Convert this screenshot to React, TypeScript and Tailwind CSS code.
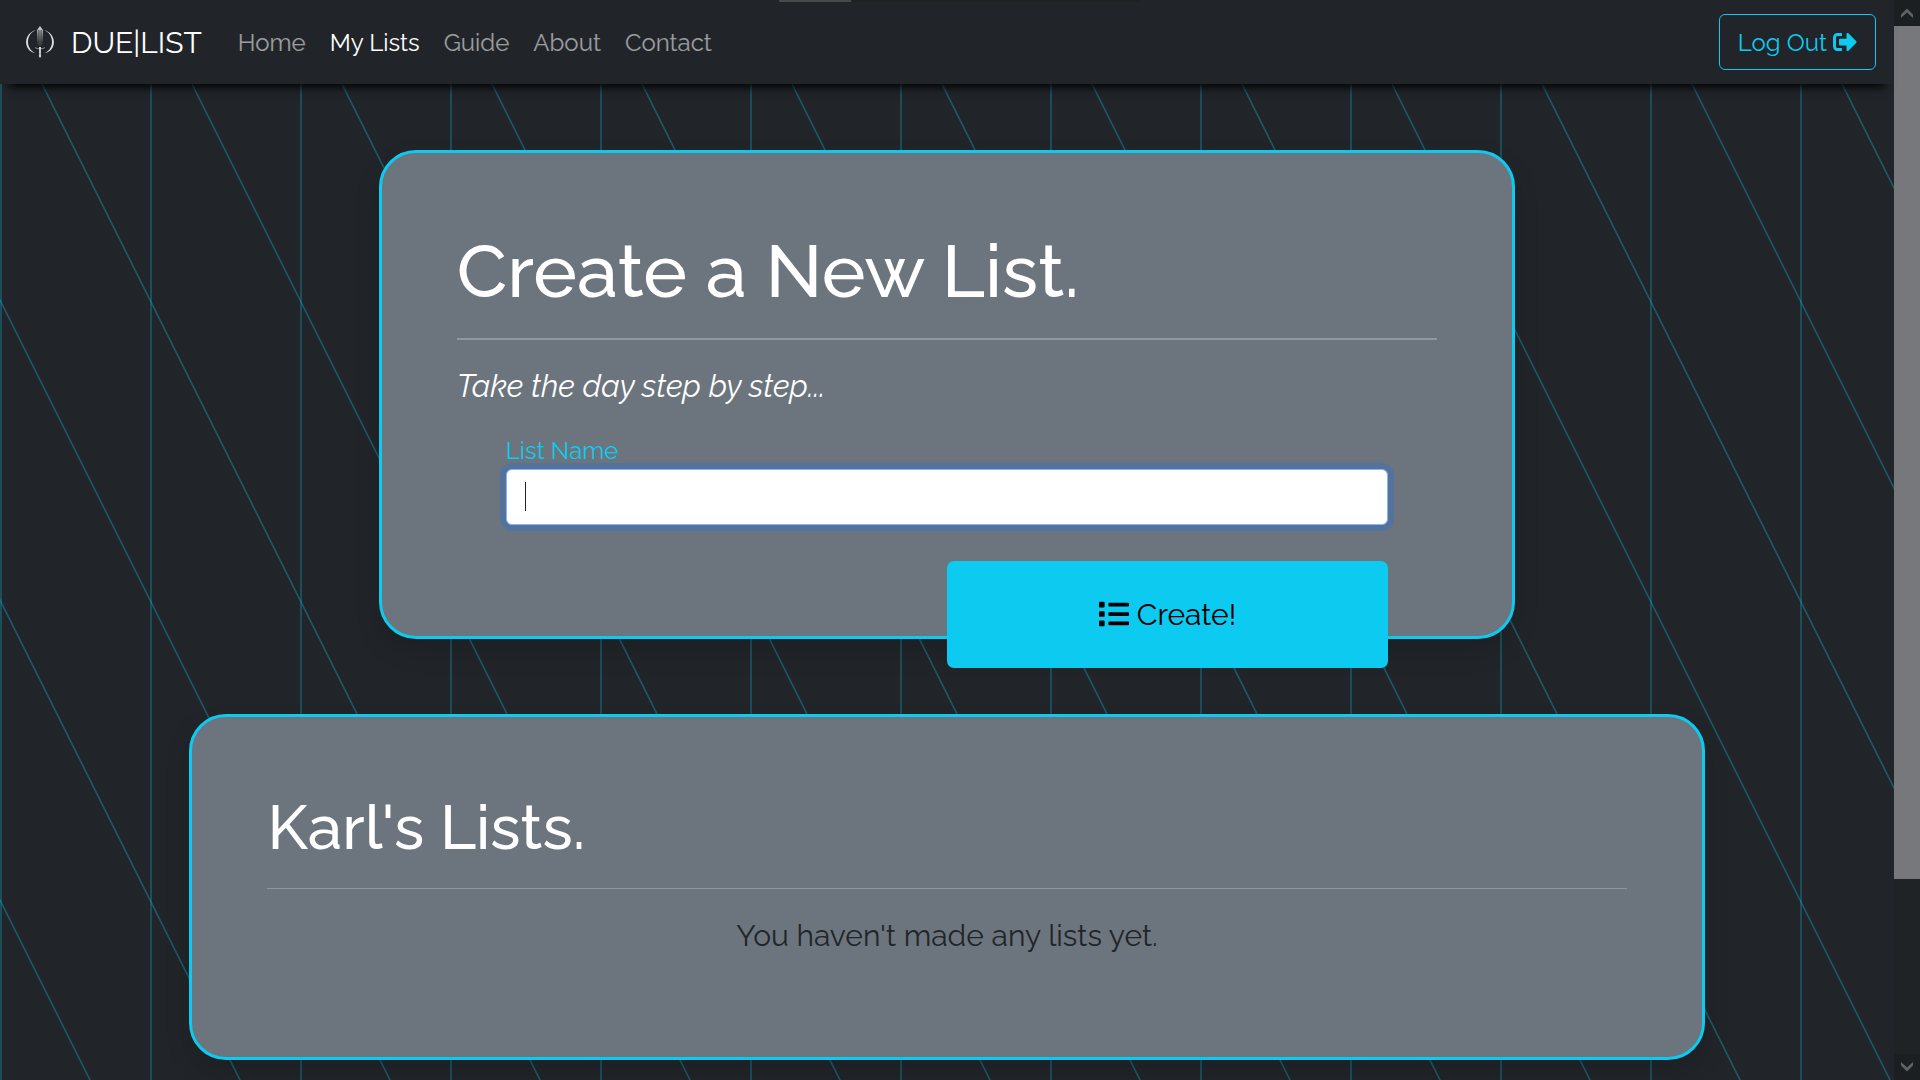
import type { ReactNode } from "react";
import { FaList, FaSignOutAlt } from "react-icons/fa";

const links = ["Home", "My Lists", "Guide", "About", "Contact"];

function Logo() {
  return (
    <svg viewBox="0 0 30 34" className="h-[34px] w-[30px]" aria-hidden="true">
      <defs>
        <linearGradient id="blade" x1="0" y1="0" x2="0" y2="1">
          <stop offset="0" stopColor="#d8d8d8" />
          <stop offset="0.6" stopColor="#777" />
          <stop offset="1" stopColor="#2a2d30" />
        </linearGradient>
      </defs>
      <path d="M11 5C-2 8.500 -2 25.500 10 28C0.500 24 0.500 9 11 5Z" fill="#e0e0e0" />
      <path d="M19 5C32 8.500 32 25.500 20 28C29.500 24 29.500 9 19 5Z" fill="#e0e0e0" />
      <path d="M15 1L18 5L17.500 17L16.500 21H13.500L12.500 17L12 5Z" fill="url(#blade)" />
      <path d="M13.900 5V18M16.100 5V18" stroke="#212529" strokeWidth="0.800" fill="none" />
      <path d="M10 21.800C12 24 18 24 20 21.800L19.500 23.200C17 24.400 13 24.400 10.500 23.200Z" fill="#999" />
      <path d="M14 22H16L15.800 30L16.300 31L15 33L13.700 31L14.200 30Z" fill="#d8d8d8" />
    </svg>
  );
}

function Backdrop() {
  return (
    <svg className="absolute inset-0 h-full w-full" aria-hidden="true">
      <defs>
        <pattern id="lattice" width="150" height="300" patternUnits="userSpaceOnUse">
          <g stroke="#0dcaf0" strokeOpacity="0.32" strokeWidth="1.500" fill="none">
            <path d="M1 0V300" />
            <path d="M-1 -2L151 302M149 -2L151 2M-1 298L1 302" />
          </g>
        </pattern>
      </defs>
      <rect width="100%" height="100%" fill="url(#lattice)" />
    </svg>
  );
}

function Card({ className, children }: { className: string; children: ReactNode }) {
  return (
    <section
      className={`mx-auto rounded-[37px] border-[3px] border-[#0dcaf0] bg-[#6c757d] p-[75px] shadow-[0_12px_24px_rgba(0,0,0,0.15)] ${className}`}
    >
      {children}
    </section>
  );
}

function Scrollbar() {
  return (
    <div className="flex w-[26px] shrink-0 flex-col bg-[#1f2325]" aria-hidden="true">
      <div className="flex h-[26px] items-center justify-center bg-[#1b1f22]">
        <svg viewBox="0 0 12 10" className="h-[10px] w-3">
          <path d="M0 6.500L6 0.500L12 6.500V10L6 4.500L0 10Z" fill="#606264" />
        </svg>
      </div>
      <div className="grow">
        <div className="h-[83%] bg-[#77787c]" />
      </div>
      <div className="flex h-[26px] items-center justify-center bg-[#1b1f22]">
        <svg viewBox="0 0 12 10" className="h-[10px] w-3">
          <path d="M0 3.500L6 9.500L12 3.500V0L6 5.500L0 0Z" fill="#606264" />
        </svg>
      </div>
    </div>
  );
}

export default function App() {
  return (
    <div className="relative flex h-screen overflow-hidden bg-[#212529] font-['Raleway','Lato',sans-serif] text-2xl leading-9 text-[#212529]">
      <div className="relative min-w-0 grow">
        <Backdrop />
        <header className="relative flex h-[84px] items-center bg-[#212529] pr-[18px] pl-[25px] shadow-[0_12px_9px_-9px_#000]">
          <a href="#" className="flex items-center gap-4 text-[30px] leading-[45px] text-white">
            <Logo />
            DUE|LIST
          </a>
          <nav className="ml-9 flex gap-6 pt-0.5">
            {links.map((label) => (
              <a key={label} href="#" className={label === "My Lists" ? "text-white" : "text-white/55"}>
                {label}
              </a>
            ))}
          </nav>
          <button className="ml-auto flex h-14 items-center gap-[6px] rounded-md border border-[#0dcaf0] px-[18px] pt-0.5 text-[#0dcaf0]">
            Log Out
            <FaSignOutAlt className="mb-0.5" />
          </button>
        </header>

        <main className="relative pt-[66px]">
          <Card className="h-[489px] w-3/5">
            <h1 className="text-[74px] leading-[86px] font-medium text-white">Create a New List.</h1>
            <hr className="my-6 border-t-2 border-white/25" />
            <p className="mb-6 text-[31px] leading-[45px] text-white italic">Take the day step by step...</p>
            <form className="mx-auto flex w-9/10 flex-col">
              <label htmlFor="list-name" className="text-[#0dcaf0]">
                List Name
              </label>
              <div className="relative">
                <input
                  id="list-name"
                  type="text"
                  className="block h-14 w-full rounded-md border border-[#86b7fe] bg-white px-[18px] caret-transparent shadow-[0_0_0_6px_rgba(13,110,253,0.25)] outline-none"
                />
                <span className="absolute top-[13px] left-[19px] h-[29px] w-px bg-[#212529]" />
              </div>
              <button
                type="button"
                className="mt-9 flex w-1/2 items-center justify-center gap-2 self-end rounded-[7px] bg-[#0dcaf0] py-[31px] text-[30px] leading-[45px] text-black"
              >
                <FaList className="mb-0.5" />
                Create!
              </button>
            </form>
          </Card>

          <Card className="mt-[75px] w-4/5">
            <h2 className="text-[62px] leading-[72px] font-medium text-white">Karl's Lists.</h2>
            <hr className="my-6 border-t border-white/25" />
            <p className="mb-6 text-center text-[30px] leading-[45px]">You haven't made any lists yet.</p>
          </Card>
        </main>
      </div>

      <Scrollbar />

      <div className="absolute top-0 left-1/2 flex h-[2px] w-[362px] -translate-x-1/2 bg-[#212121]" aria-hidden="true">
        <div className="w-1/5 bg-[#4a4a4a]" />
      </div>
    </div>
  );
}
